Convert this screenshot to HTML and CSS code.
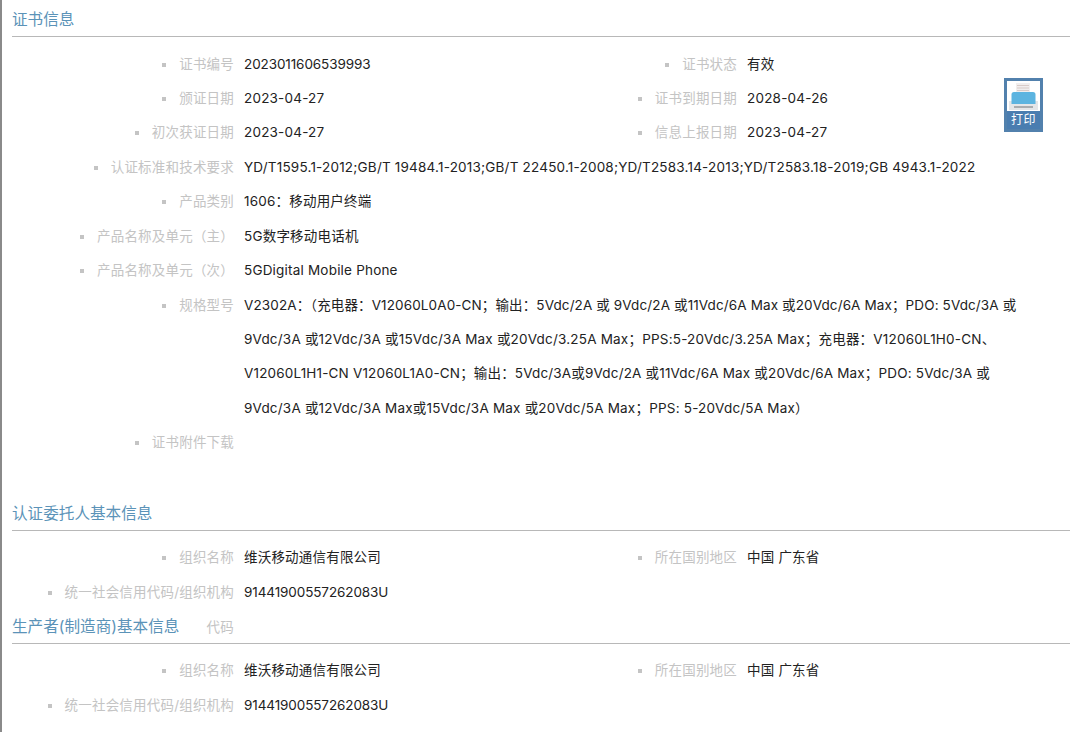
FILE: index.html
```html
<!DOCTYPE html>
<html lang="zh">
<head>
<meta charset="utf-8">
<title>证书信息</title>
<link rel="stylesheet" href="styles.css">
</head>
<body>
<main class="page">
  <section class="section first">
    <h2 class="heading"><span class="heading-text">证书信息</span></h2>
    <div class="grid with-print">
      <div class="label">证书编号</div><div class="value code">2023011606539993</div>
      <div class="label">证书状态</div><div class="value">有效</div>
      <div class="label">颁证日期</div><div class="value">2023-04-27</div>
      <div class="label">证书到期日期</div><div class="value">2028-04-26</div>
      <div class="label">初次获证日期</div><div class="value">2023-04-27</div>
      <div class="label">信息上报日期</div><div class="value">2023-04-27</div>
      <div class="label">认证标准和技术要求</div><div class="value wide">YD/T1595.1-2012;GB/T 19484.1-2013;GB/T 22450.1-2008;YD/T2583.14-2013;YD/T2583.18-2019;GB 4943.1-2022</div>
      <div class="label">产品类别</div><div class="value wide">1606：移动用户终端</div>
      <div class="label">产品名称及单元（主）</div><div class="value wide">5G数字移动电话机</div>
      <div class="label">产品名称及单元（次）</div><div class="value wide">5GDigital Mobile Phone</div>
      <div class="label tall">规格型号</div><div class="value wide tall"><span class="line-a">V2302A：（充电器：V12060L0A0-CN；输出：5Vdc/2A 或 9Vdc/2A 或11Vdc/6A Max 或20Vdc/6A Max；PDO: 5Vdc/3A 或</span><br><span class="line-b">9Vdc/3A 或12Vdc/3A 或15Vdc/3A Max 或20Vdc/3.25A Max；PPS:5-20Vdc/3.25A Max；充电器：V12060L1H0-CN、</span><br><span class="line-c">V12060L1H1-CN V12060L1A0-CN；输出：5Vdc/3A或9Vdc/2A 或11Vdc/6A Max 或20Vdc/6A Max；PDO: 5Vdc/3A 或</span><br>9Vdc/3A 或12Vdc/3A Max或15Vdc/3A Max 或20Vdc/5A Max；PPS: 5-20Vdc/5A Max）</div>
      <div class="label">证书附件下载</div><div class="value wide"></div>
      <a class="print" href="#">
        <svg class="print-art" viewBox="0 0 33 30" aria-hidden="true">
          <rect width="33" height="30" fill="#fff"/>
          <rect x="2" y="20" width="29" height="9" fill="#e4e6e8"/>
          <rect x="9" y="2" width="14" height="10" fill="#f1eeee"/>
          <path d="M10 4.500h12M10 7h12M10 9.500h12" stroke="#d8cbc8" stroke-width="1"/>
          <path d="M7 11h19a2.500 2.500 0 0 1 2.500 2.500V23h-24v-9.500A2.500 2.500 0 0 1 7 11z" fill="#5cb4e0"/>
          <rect x="7" y="25" width="19" height="2" fill="#a9adb0"/>
        </svg>
        <span class="print-text">打印</span>
      </a>
    </div>
  </section>
  <section class="section second">
    <h2 class="heading"><span class="heading-text">认证委托人基本信息</span></h2>
    <div class="grid">
      <div class="label">组织名称</div><div class="value">维沃移动通信有限公司</div>
      <div class="label">所在国别地区</div><div class="value">中国 广东省</div>
      <div class="label">统一社会信用代码/组织机构</div><div class="value wide code">91441900557262083U</div>
    </div>
  </section>
  <section class="section third">
    <h2 class="heading"><span class="heading-text">生产者(制造商)基本信息</span><span class="heading-code">代码</span></h2>
    <div class="grid">
      <div class="label">组织名称</div><div class="value">维沃移动通信有限公司</div>
      <div class="label">所在国别地区</div><div class="value">中国 广东省</div>
      <div class="label">统一社会信用代码/组织机构</div><div class="value wide code">91441900557262083U</div>
    </div>
  </section>
</main>
</body>
</html>
```
FILE: styles.css
```css
* { box-sizing: border-box; }
html, body { margin: 0; padding: 0; background: #fff; }
body {
  height: 732px;
  overflow: hidden;
  font-family: Inter, "Noto Sans CJK SC", sans-serif;
  font-size: 13.5px;
  color: #222;
}
.page {
  height: 732px;
  border-left: 2px solid #8a8a8a;
  padding: 0 10px;
}
.section.second { margin-top: 40.3px; }
.section.third { margin-top: 3.64px; }
.heading {
  display: flex;
  justify-content: space-between;
  width: 100%;
  height: 37px;
  margin: 0;
  padding-top: 10px;
  font-size: 15.6px;
  line-height: 20px;
  font-weight: 400;
  color: #5b93b8;
  border-bottom: 1px solid #b8b8b8;
}
.second .heading, .third .heading { height: 31px; padding-top: 4px; }
.heading-code {
  flex: 1;
  text-align: right;
  margin-right: 836px;
  font-size: 13.5px;
  letter-spacing: 0.2px;
  color: #c4c4c4;
}
.grid {
  position: relative;
  display: grid;
  grid-template-columns: 222px 261px 222px 1fr;
  column-gap: 10px;
  grid-auto-rows: 34.43px;
  line-height: 34.43px;
  padding-top: 9.55px;
}
.second .grid, .third .grid { padding-top: 9.5px; }
.label {
  text-align: right;
  color: #c4c4c4;
  white-space: nowrap;
  letter-spacing: 0.2px;
}
.label::before {
  content: "";
  display: inline-block;
  width: 4px;
  height: 4px;
  margin-right: 13px;
  vertical-align: 2px;
  background: #c4c4c4;
}
.value { white-space: nowrap; letter-spacing: 0.2px; }
.value.code { letter-spacing: -0.1px; }
.value.wide { grid-column: span 3; }
.tall { grid-row: span 4; }
.line-a { letter-spacing: 0.12px; }
.line-b { letter-spacing: 0.2px; }
.line-c { letter-spacing: 0.17px; }
.print {
  position: absolute;
  left: 992px;
  top: 41px;
  width: 39px;
  height: 54px;
  display: flex;
  flex-direction: column;
  border: 3px solid #5281ad;
  background: #4a7db0;
  text-decoration: none;
}
.print-art { display: block; width: 33px; height: 30px; flex: none; }
.print-text {
  display: block;
  text-align: center;
  color: #fff;
  font-size: 12px;
  line-height: 18px;
  letter-spacing: 0.5px;
}
```
